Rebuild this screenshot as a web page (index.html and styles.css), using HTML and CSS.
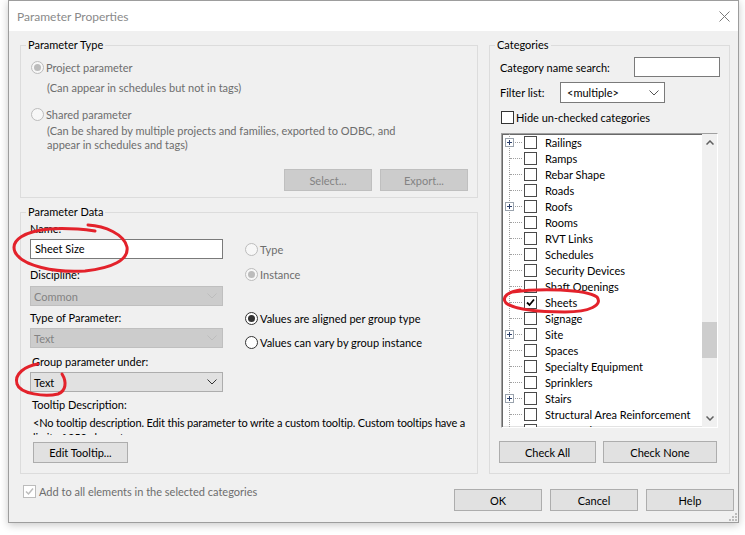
FILE: index.html
```html
<!DOCTYPE html>
<html lang="en">
  <head>
    <meta charset="UTF-8" />
    <title>Parameter Properties</title>
    <link rel="stylesheet" href="styles.css">
  </head>
  <body>
    <div class="window">
      <div class="titlebar">
        <span class="title">Parameter Properties</span>
        <svg class="close" width="11" height="11" viewBox="0 0 11 11">
          <path d="M0.5 0.5 L10.5 10.5 M10.5 0.5 L0.5 10.5" stroke="#7a7a7a" stroke-width="1" />
        </svg>
      </div>

      <div class="content">
        <div class="columns">
          <div class="left">
            <!-- Parameter Type -->
            <fieldset class="group">
              <legend>Parameter Type</legend>
              <div class="type-body">
                <div class="option disabled"><span class="radio checked"></span>Project parameter</div>
                <p class="note first">(Can appear in schedules but not in tags)</p>
                <div class="option disabled second"><span class="radio"></span>Shared parameter</div>
                <p class="note two-lines">(Can be shared by multiple projects and families, exported to ODBC, and<br>appear in schedules and tags)</p>
                <div class="btn-row">
                  <button class="btn" disabled>Select...</button>
                  <button class="btn" disabled>Export...</button>
                </div>
              </div>
            </fieldset>

            <!-- Parameter Data -->
            <fieldset class="group data-group">
              <legend>Parameter Data</legend>
              <div class="data-body">
                <div class="data-cols">
                  <div class="fields">
                    <div class="label">Name:</div>
                    <div class="textbox">Sheet Size</div>
                    <div class="label discipline">Discipline:</div>
                    <div class="combo disabled discipline-box">
                      <span>Common</span>
                      <svg width="10" height="6" viewBox="0 0 10 6"><path d="M0.5 0.5 L5 5 L9.5 0.5" fill="none" stroke="#bdbdbd" /></svg>
                    </div>
                    <div class="label type-label">Type of Parameter:</div>
                    <div class="combo disabled">
                      <span>Text</span>
                      <svg width="10" height="6" viewBox="0 0 10 6"><path d="M0.5 0.5 L5 5 L9.5 0.5" fill="none" stroke="#bdbdbd" /></svg>
                    </div>
                    <div class="label group-label">Group parameter under:</div>
                    <div class="combo">
                      <span>Text</span>
                      <svg width="10" height="6" viewBox="0 0 10 6"><path d="M0.5 0.5 L5 5 L9.5 0.5" fill="none" stroke="#333" /></svg>
                    </div>
                  </div>

                  <div class="options">
                    <div class="option disabled type-opt"><span class="radio"></span>Type</div>
                    <div class="option disabled instance-opt"><span class="radio checked"></span>Instance</div>
                    <div class="option aligned-opt"><span class="radio checked"></span>Values are aligned per group type</div>
                    <div class="option vary-opt"><span class="radio"></span>Values can vary by group instance</div>
                  </div>
                </div>

                <div class="label tooltip-label">Tooltip Description:</div>
                <div class="tooltip-text">&lt;No tooltip description. Edit this parameter to write a custom tooltip. Custom tooltips have a limit of 250 characters.&gt;</div>
                <button class="btn edit-btn">Edit Tooltip...</button>
              </div>
            </fieldset>
          </div>

          <!-- Categories -->
          <fieldset class="group categories">
            <legend>Categories</legend>
            <div class="cat-body">
              <div class="search-row">
                <span>Category name search:</span>
                <div class="textbox search-box"></div>
              </div>
              <div class="filter-row">
                <span class="filter-label">Filter list:</span>
                <div class="combo white">
                  <span>&lt;multiple&gt;</span>
                  <svg width="10" height="6" viewBox="0 0 10 6"><path d="M0.5 0.5 L5 5 L9.5 0.5" fill="none" stroke="#555" /></svg>
                </div>
              </div>
              <div class="option hide-row"><span class="check"></span>Hide un-checked categories</div>

              <div class="listbox">
                <div class="items">
                  <div class="row"><span class="tree has-plus"><span class="plus"></span><span class="dots"></span></span><span class="check"></span>Railings</div>
                  <div class="row"><span class="tree"><span class="dots"></span></span><span class="check"></span>Ramps</div>
                  <div class="row"><span class="tree"><span class="dots"></span></span><span class="check"></span>Rebar Shape</div>
                  <div class="row"><span class="tree"><span class="dots"></span></span><span class="check"></span>Roads</div>
                  <div class="row"><span class="tree has-plus"><span class="plus"></span><span class="dots"></span></span><span class="check"></span>Roofs</div>
                  <div class="row"><span class="tree"><span class="dots"></span></span><span class="check"></span>Rooms</div>
                  <div class="row"><span class="tree"><span class="dots"></span></span><span class="check"></span>RVT Links</div>
                  <div class="row"><span class="tree"><span class="dots"></span></span><span class="check"></span>Schedules</div>
                  <div class="row"><span class="tree"><span class="dots"></span></span><span class="check"></span>Security Devices</div>
                  <div class="row"><span class="tree"><span class="dots"></span></span><span class="check"></span>Shaft Openings</div>
                  <div class="row"><span class="tree"><span class="dots"></span></span><span class="check checked"><svg width="11" height="11" viewBox="0 0 11 11"><path d="M2 5.5 L4.5 8 L9 2.5" fill="none" stroke="#000" stroke-width="1.8" /></svg></span>Sheets</div>
                  <div class="row"><span class="tree"><span class="dots"></span></span><span class="check"></span>Signage</div>
                  <div class="row"><span class="tree has-plus"><span class="plus"></span><span class="dots"></span></span><span class="check"></span>Site</div>
                  <div class="row"><span class="tree"><span class="dots"></span></span><span class="check"></span>Spaces</div>
                  <div class="row"><span class="tree"><span class="dots"></span></span><span class="check"></span>Specialty Equipment</div>
                  <div class="row"><span class="tree"><span class="dots"></span></span><span class="check"></span>Sprinklers</div>
                  <div class="row"><span class="tree has-plus"><span class="plus"></span><span class="dots"></span></span><span class="check"></span>Stairs</div>
                  <div class="row"><span class="tree"><span class="dots"></span></span><span class="check"></span>Structural Area Reinforcement</div>
                  <div class="row"><span class="tree"><span class="dots"></span></span><span class="check"></span>Structural Beam Systems</div>
                </div>
                <div class="scrollbar">
                  <div class="arrow">
                    <svg width="8" height="5" viewBox="0 0 8 5"><path d="M0.5 4.5 L4 1 L7.5 4.5" fill="none" stroke="#606060" stroke-width="1.5" /></svg>
                  </div>
                  <div class="track"><div class="thumb"></div></div>
                  <div class="arrow">
                    <svg width="8" height="5" viewBox="0 0 8 5"><path d="M0.5 0.5 L4 4 L7.5 0.5" fill="none" stroke="#606060" stroke-width="1.5" /></svg>
                  </div>
                </div>
              </div>

              <div class="cat-buttons">
                <button class="btn check-all">Check All</button>
                <button class="btn check-none">Check None</button>
              </div>
            </div>
          </fieldset>
        </div>

        <div class="footer">
          <div class="option disabled add-all">
            <span class="check checked"><svg width="11" height="11" viewBox="0 0 11 11"><path d="M2 5.5 L4.5 8 L9 2.5" fill="none" stroke="#bcbcbc" stroke-width="1.5" /></svg></span>Add to all elements in the selected categories
          </div>
          <div class="footer-buttons">
            <button class="btn">OK</button>
            <button class="btn">Cancel</button>
            <button class="btn">Help</button>
          </div>
        </div>
      </div>

      <svg class="grip" width="8" height="8" viewBox="0 0 8 8">
        <rect x="6" y="0" width="2" height="2" fill="#bcbcbc" />
        <rect x="3" y="3" width="2" height="2" fill="#bcbcbc" />
        <rect x="6" y="3" width="2" height="2" fill="#bcbcbc" />
        <rect x="0" y="6" width="2" height="2" fill="#bcbcbc" />
        <rect x="3" y="6" width="2" height="2" fill="#bcbcbc" />
        <rect x="6" y="6" width="2" height="2" fill="#bcbcbc" />
      </svg>
    </div>

    <!-- hand-drawn red marks on top of the screenshot -->
    <svg class="marks" width="745" height="535" viewBox="0 0 745 535">
      <path d="M88 225 C105 226 124 234 127 247 C129 260 112 268 85 271 C55 273 22 266 15 252 C10 240 25 231 50 229 C65 228 80 229 95 231" />
      <path d="M38 364 C25 366 14 374 17 384 C20 394 45 397 58 394 C66 391 67 382 62 374" />
      <path d="M512 292 C540 288 585 289 597 297 C603 305 590 312 565 312 C540 312 515 310 506 303 C501 297 508 292 520 290" />
    </svg>
  </body>
</html>
```

FILE: styles.css
```css
* {
  box-sizing: border-box;
}

body {
  margin: 0;
  width: 745px;
  height: 535px;
  overflow: hidden;
  position: relative;
  background: #fff;
  font-family: Lato, 'Noto Sans', sans-serif;
  font-size: 11px;
  color: #000;
}

.window {
  position: relative;
  margin-left: 8px;
  width: 731px;
  height: 523px;
  border: 1px solid #9d9d9d;
  background: #f0f0f0;
  box-shadow: 0 2px 8px rgba(0, 0, 0, 0.22);
  display: flex;
  flex-direction: column;
}

.titlebar {
  height: 30px;
  flex: none;
  background: #fff;
  display: flex;
  align-items: center;
  justify-content: space-between;
  padding: 0 8px 0 8px;
}

.title {
  font-size: 12px;
  color: #8a8a8a;
}

.content {
  flex: 1;
  padding: 6px 8px 11px 11px;
  display: flex;
  flex-direction: column;
}

.columns {
  display: flex;
  gap: 11px;
}

.left {
  width: 458px;
  display: flex;
  flex-direction: column;
}

/* group boxes */
.group {
  margin: 0;
  padding: 0;
  min-width: 0;
  border: 1px solid #dcdcdc;

  & legend {
    margin-left: 5px;
    padding: 0 2px;
    line-height: 16px;
  }
}

.option {
  display: flex;
  align-items: center;
  height: 16px;
  white-space: nowrap;

  &.disabled {
    color: #6d6d6d;
  }
}

.radio {
  width: 13px;
  height: 13px;
  margin-right: 2px;
  border: 1px solid #333;
  border-radius: 50%;
  background: #fff;
  display: flex;
  align-items: center;
  justify-content: center;
  flex: none;

  &.checked::after {
    content: '';
    width: 7px;
    height: 7px;
    border-radius: 50%;
    background: #333;
  }
}

.disabled .radio {
  border-color: #bcbcbc;
  background: #f7f7f7;

  &.checked::after {
    background: #bcbcbc;
  }
}

.check {
  width: 13px;
  height: 13px;
  margin-right: 2px;
  border: 1px solid #333;
  background: #fff;
  display: flex;
  align-items: center;
  justify-content: center;
  flex: none;
}

.disabled .check {
  border-color: #bcbcbc;
}

.btn {
  font: inherit;
  color: #000;
  height: 22px;
  padding: 0;
  background: #e1e1e1;
  border: 1px solid #adadad;

  &:disabled {
    color: #838383;
    background: #cccccc;
    border-color: #bfbfbf;
  }
}

.textbox {
  height: 20px;
  background: #fff;
  border: 1px solid #7a7a7a;
  padding-left: 4px;
  line-height: 18px;
}

.combo {
  height: 20px;
  display: flex;
  align-items: center;
  justify-content: space-between;
  padding: 0 5px 0 3px;
  background: #e1e1e1;
  border: 1px solid #adadad;

  &.disabled {
    color: #838383;
    background: #cccccc;
    border-color: #bfbfbf;
  }

  &.white {
    background: #fff;
    border-color: #7a7a7a;
  }
}

/* Parameter Type */
.type-body {
  padding: 6px 9px 6px 10px;
}

.note {
  margin: 5px 0 0 16px;
  line-height: 16px;
  color: #6d6d6d;

  &.two-lines {
    margin-top: 2px;
    line-height: 14px;
  }
}

.option.second {
  margin-top: 10px;
}

.btn-row {
  margin-top: 17px;
  display: flex;
  justify-content: flex-end;
  gap: 8px;

  & .btn {
    width: 88px;
  }
}

/* Parameter Data */
.data-group {
  margin-top: 6px;
}

.data-body {
  padding: 1px 7px 10px 9px;
}

.data-cols {
  display: flex;
  gap: 22px;
}

.fields {
  width: 193px;

  & .textbox {
    margin-top: 2px;
  }

  & .combo {
    margin-top: 2px;
  }

  & .discipline-box {
    margin-top: 3px;
  }
}

.label {
  line-height: 16px;

  &.discipline {
    margin-top: 8px;
  }

  &.type-label {
    margin-top: 4px;
  }

  &.group-label {
    margin-top: 6px;
    padding-left: 2px;
  }

  &.tooltip-label {
    margin-top: 5px;
    padding-left: 2px;
  }
}

.options {
  & .type-opt {
    margin-top: 20px;
  }

  & .instance-opt {
    margin-top: 9px;
  }

  & .aligned-opt {
    margin-top: 28px;
  }

  & .vary-opt {
    margin-top: 8px;
  }
}

.tooltip-text {
  margin: 2px -8px 0 0;
  padding-left: 3px;
  height: 20px;
  line-height: 15px;
  letter-spacing: -0.15px;
  overflow: hidden;
}

.edit-btn {
  margin: 7px 0 0 3px;
  width: 95px;
  height: 21px;
}

/* Categories */
.categories {
  width: 241px;
}

.cat-body {
  padding: 4px 10px 0 10px;
}

.search-row {
  height: 20px;
  display: flex;
  align-items: center;
  justify-content: space-between;

  & .search-box {
    width: 86px;
    margin-right: -1px;
  }
}

.filter-row {
  margin-top: 5px;
  display: flex;
  align-items: center;

  & .filter-label {
    width: 60px;
  }

  & .combo {
    width: 105px;
    height: 21px;
    padding-left: 6px;
  }
}

.hide-row {
  margin: 6px 0 0 1px;
}

.listbox {
  margin: 8px 0 0 1px;
  width: 217px;
  height: 295px;
  display: flex;
  background: #fff;
  border: 1px solid;
  border-color: #a0a0a0 #fff #fff #a0a0a0;
  box-shadow: inset 1px 1px 0 #696969, inset -1px -1px 0 #e3e3e3;
}

.items {
  flex: 1;
  overflow: hidden;
  background-image: linear-gradient(#a0a0a0 50%, transparent 50%);
  background-size: 1px 2px;
  background-repeat: repeat-y;
  background-position: 7px 0;
}

.row {
  height: 16px;
  display: flex;
  align-items: center;
  white-space: nowrap;

  & .check {
    margin-right: 8px;
    border-color: #4a4a4a;
  }
}

.tree {
  width: 22px;
  height: 16px;
  display: flex;
  align-items: center;
  padding-left: 8px;

  &.has-plus {
    padding-left: 3px;
  }
}

.dots {
  flex: 1;
  margin-right: 2px;
  border-top: 1px dotted #a0a0a0;
}

.plus {
  width: 9px;
  height: 9px;
  margin-right: 1px;
  border: 1px solid #9aa3ad;
  background: linear-gradient(#2b3f6b, #2b3f6b) center / 5px 1px no-repeat,
    linear-gradient(#2b3f6b, #2b3f6b) center / 1px 5px no-repeat, #fff;
}

.scrollbar {
  width: 15px;
  background: #f0f0f0;
  display: flex;
  flex-direction: column;

  & .arrow {
    height: 17px;
    display: flex;
    align-items: center;
    justify-content: center;
  }

  & .track {
    flex: 1;
  }

  & .thumb {
    margin-top: 171px;
    height: 36px;
    background: #cdcdcd;
  }
}

.cat-buttons {
  margin: 13px 0 0 -1px;
  display: flex;
  gap: 7px;

  & .check-all {
    width: 97px;
  }

  & .check-none {
    width: 114px;
  }
}

/* bottom row */
.footer {
  margin-top: 15px;
  display: flex;
  align-items: flex-start;
  padding-left: 3px;
  margin-right: -4px;

  & .add-all {
    margin-top: -6px;
  }

  & .add-all .check {
    margin-right: 3px;
  }
}

.footer-buttons {
  margin-left: auto;
  display: flex;
  gap: 8px;

  & .btn {
    width: 88px;
  }
}

.grip {
  position: absolute;
  right: 1px;
  bottom: 1px;
}

.marks {
  position: absolute;
  top: 0;
  left: 0;
  pointer-events: none;

  & path {
    fill: none;
    stroke: #e3222b;
    stroke-width: 3;
    stroke-linecap: round;
    stroke-linejoin: round;
  }
}
```
